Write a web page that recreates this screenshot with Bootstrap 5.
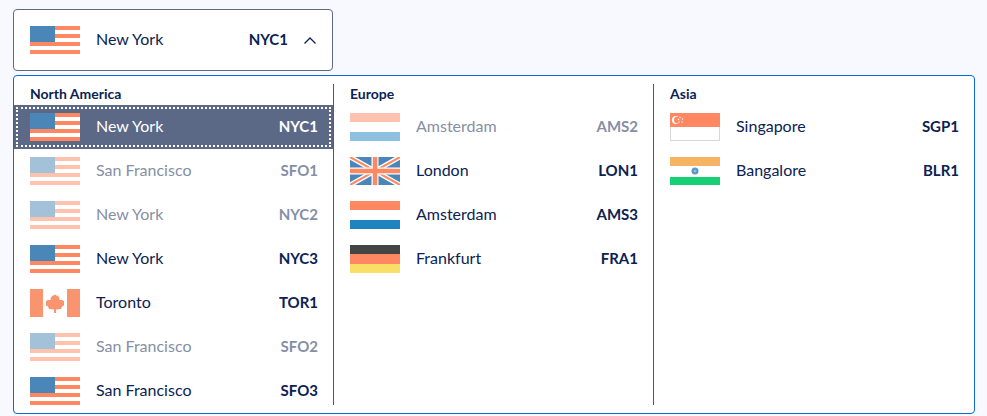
<!DOCTYPE html>
<html lang="en">
<head>
<meta charset="utf-8">
<title>Region picker</title>
<link rel="stylesheet" href="https://cdn.jsdelivr.net/npm/bootstrap@5.3.0/dist/css/bootstrap.min.css">
<style>
body{background:#f8f9ff;font-family:"Lato","Liberation Sans",sans-serif;color:#0b2252;overflow:hidden;width:987px;height:416px}
.picker{padding:9px 12px 0 13px}
.trigger{width:320px;height:62px;padding:0 16px;border:1px solid #5b6987;border-radius:4px;background:#fff;color:#0b2252;font-size:16px;line-height:20px;margin-bottom:4px}
.trigger:hover,.trigger:active,.trigger:focus{background:#fff;color:#0b2252;border-color:#5b6987}
.panel{height:339px;padding-top:8px;background:#fff;border:1px solid #0b68d4;border-radius:4px}
.region{width:320px;height:321px;border-right:1px solid #0b68d4}
.region:last-child{flex:1;border-right:0}
.region-title{height:21px;padding-left:16px;font-size:14px;line-height:20px;font-weight:700;margin:0}
.opt{height:44px;padding:8px 15px 8px 16px;font-size:16px;line-height:20px;color:#0b2252;text-decoration:none}
.opt span,.trigger span{padding-bottom:2px}
.opt-code{font-weight:700;font-size:15px}
.flag{width:50px;height:28px;display:block;flex:none;margin-right:16px}
.opt-off{color:#868fa5}
.opt-off .flag{opacity:.5}
.opt-on{background:#5b6987;color:#fff;outline:2px dotted #fff;outline-offset:-4px}
.opt-end{margin-bottom:-8px}
.chev{width:12px;height:7px;margin-left:16px;flex:none}
</style>
</head>
<body>
<svg width="0" height="0" class="d-block" aria-hidden="true">
<symbol id="f-us" viewBox="0 0 50 28"><rect width="50" height="28" fill="#fff"/><path fill="#ff8762" d="M0 0h50v4H0zM0 8h50v4H0zM0 16h50v4H0zM0 24h50v4H0z"/><rect width="25" height="16" fill="#4a86b7"/></symbol>
<symbol id="f-nl" viewBox="0 0 50 28"><rect width="50" height="9" fill="#ff8762"/><rect y="19" width="50" height="9" fill="#1e84c0"/></symbol>
<symbol id="f-de" viewBox="0 0 50 28"><rect width="50" height="9" fill="#444"/><rect y="9" width="50" height="10" fill="#ff8762"/><rect y="19" width="50" height="9" fill="#f9df66"/></symbol>
<symbol id="f-gb" viewBox="0 0 50 28"><rect width="50" height="28" fill="#4a86b7"/><path d="M0 0L50 28M50 0L0 28" stroke="#fff" stroke-width="5"/><path d="M0 0L50 28M50 0L0 28" stroke="#ff8762" stroke-width="2"/><path d="M25 0V28M0 14H50" stroke="#fff" stroke-width="7"/><path d="M25 0V28M0 14H50" stroke="#ff8762" stroke-width="4.500"/></symbol>
<symbol id="f-ca" viewBox="0 0 50 28"><rect width="13" height="28" fill="#f9946e"/><rect x="37" width="13" height="28" fill="#f9946e"/><path fill="#f9946e" d="M25 5.500L27.500 7 29 8 29.500 11 32 11 34 12 34 16.500 32 17.500 31 20 26 20.500 26 24 24 24 24 20.500 19 20 18 17.500 16 16.500 16 12 18 11 20.500 11 21 8 22.500 7Z"/></symbol>
<symbol id="f-sg" viewBox="0 0 50 28"><rect x=".5" y=".5" width="49" height="27" fill="#fff" stroke="#d8d8d8"/><rect width="50" height="14" fill="#ff8762"/><circle cx="6" cy="7" r="4" fill="#fff"/><circle cx="7.500" cy="7" r="3.500" fill="#ff8762"/><g fill="#fff"><circle cx="10" cy="4.500" r=".7"/><circle cx="12.500" cy="6" r=".7"/><circle cx="12" cy="9" r=".7"/><circle cx="9" cy="9" r=".7"/><circle cx="8.500" cy="6.500" r=".7"/></g></symbol>
<symbol id="f-in" viewBox="0 0 50 28"><rect width="50" height="9" fill="#f6b362"/><rect y="20" width="50" height="8" fill="#17d075"/><circle cx="25" cy="14" r="3.500" fill="#5f97c5"/><circle cx="25" cy="14" r="1.200" fill="#9cc0de"/></symbol>
</svg>
<div class="picker">
<button type="button" class="btn trigger d-flex align-items-center">
<svg class="flag"><use href="#f-us"/></svg><span>New York</span><span class="opt-code ms-auto">NYC1</span>
<svg class="chev" viewBox="0 0 12 7"><path d="M.5 6.500L6 1 11.500 6.500" fill="none" stroke="#0b2252" stroke-width="1.300"/></svg>
</button>
<div class="panel d-flex">
<section class="region">
<h6 class="region-title">North America</h6>
<a class="opt opt-on d-flex align-items-center" href="#"><svg class="flag"><use href="#f-us"/></svg><span>New York</span><span class="opt-code ms-auto">NYC1</span></a>
<a class="opt opt-off d-flex align-items-center" href="#"><svg class="flag"><use href="#f-us"/></svg><span>San Francisco</span><span class="opt-code ms-auto">SFO1</span></a>
<a class="opt opt-off d-flex align-items-center" href="#"><svg class="flag"><use href="#f-us"/></svg><span>New York</span><span class="opt-code ms-auto">NYC2</span></a>
<a class="opt d-flex align-items-center" href="#"><svg class="flag"><use href="#f-us"/></svg><span>New York</span><span class="opt-code ms-auto">NYC3</span></a>
<a class="opt d-flex align-items-center" href="#"><svg class="flag"><use href="#f-ca"/></svg><span>Toronto</span><span class="opt-code ms-auto">TOR1</span></a>
<a class="opt opt-off d-flex align-items-center" href="#"><svg class="flag"><use href="#f-us"/></svg><span>San Francisco</span><span class="opt-code ms-auto">SFO2</span></a>
<a class="opt opt-end d-flex align-items-center" href="#"><svg class="flag"><use href="#f-us"/></svg><span>San Francisco</span><span class="opt-code ms-auto">SFO3</span></a>
</section>
<section class="region">
<h6 class="region-title">Europe</h6>
<a class="opt opt-off d-flex align-items-center" href="#"><svg class="flag"><use href="#f-nl"/></svg><span>Amsterdam</span><span class="opt-code ms-auto">AMS2</span></a>
<a class="opt d-flex align-items-center" href="#"><svg class="flag"><use href="#f-gb"/></svg><span>London</span><span class="opt-code ms-auto">LON1</span></a>
<a class="opt d-flex align-items-center" href="#"><svg class="flag"><use href="#f-nl"/></svg><span>Amsterdam</span><span class="opt-code ms-auto">AMS3</span></a>
<a class="opt d-flex align-items-center" href="#"><svg class="flag"><use href="#f-de"/></svg><span>Frankfurt</span><span class="opt-code ms-auto">FRA1</span></a>
</section>
<section class="region">
<h6 class="region-title">Asia</h6>
<a class="opt d-flex align-items-center" href="#"><svg class="flag"><use href="#f-sg"/></svg><span>Singapore</span><span class="opt-code ms-auto">SGP1</span></a>
<a class="opt d-flex align-items-center" href="#"><svg class="flag"><use href="#f-in"/></svg><span>Bangalore</span><span class="opt-code ms-auto">BLR1</span></a>
</section>
</div>
</div>
</body>
</html>
